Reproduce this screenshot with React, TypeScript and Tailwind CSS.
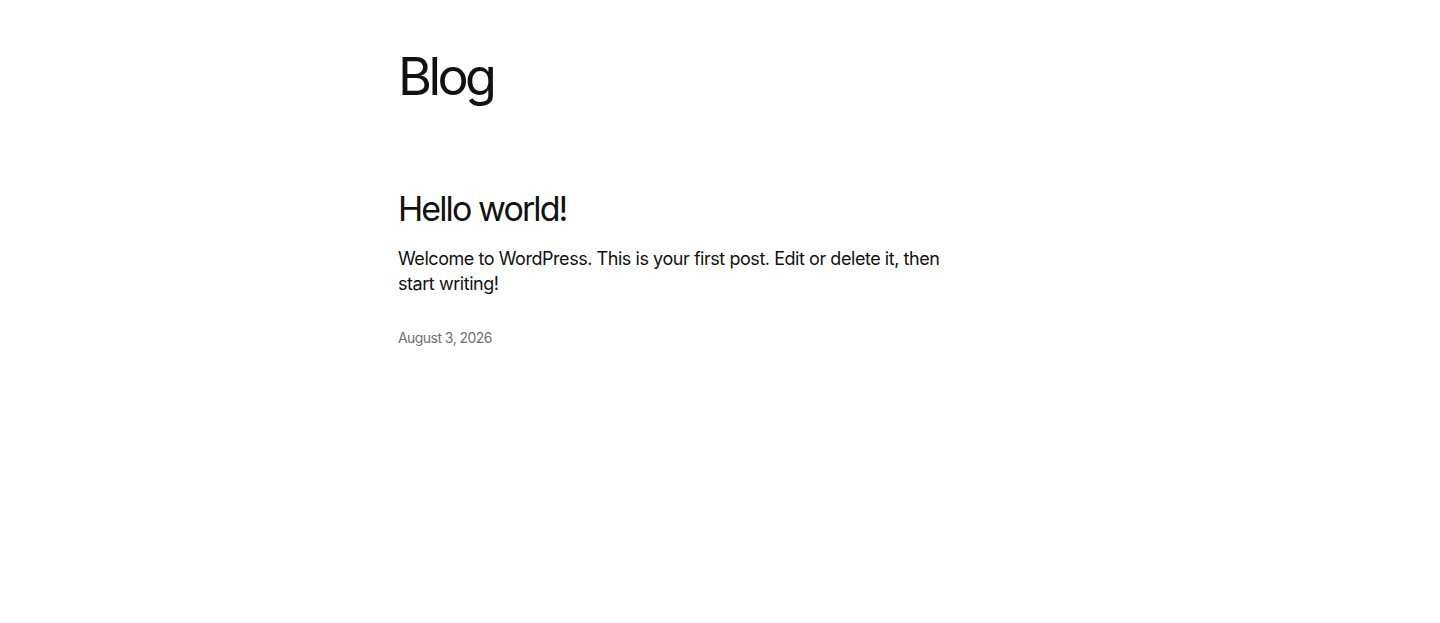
export default function App() {
  const font = { fontFamily: 'Inter, "Noto Sans", sans-serif' };
  return (
    <div className="min-h-[623px] bg-white text-[#111111]" style={font}>
      <div className="pl-[398px] pt-[46px]">
        <h1 className="text-[52px] leading-[1.2] font-normal tracking-[-3.6px]">Blog</h1>
        <div className="mt-[81px] w-[560px]">
          <h2 className="text-[34px] leading-[1.2] font-normal tracking-[-1.9px]">Hello world!</h2>
          <p className="mt-[16px] text-[18px] leading-[25px] tracking-[-0.45px] text-[#111111]">
            Welcome to WordPress. This is your first post. Edit or delete it, then start writing!
          </p>
          <div className="mt-[32px] text-[14px] leading-[20px] text-[#707070] tracking-[-0.55px]">August 3, 2026</div>
        </div>
      </div>
    </div>
  );
}
